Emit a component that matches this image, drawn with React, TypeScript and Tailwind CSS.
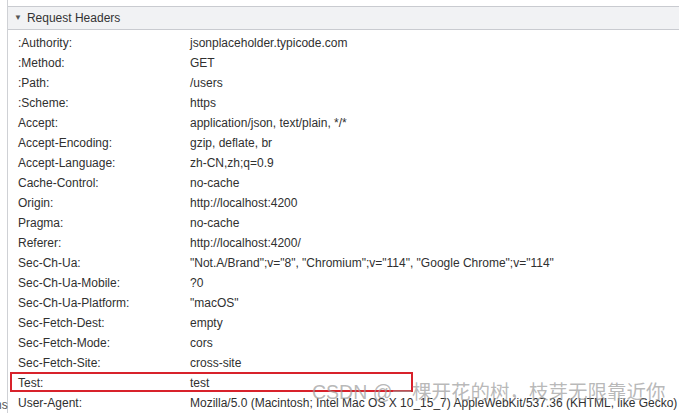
import React from 'react';

const headers: [string, string][] = [
  [':Authority:', 'jsonplaceholder.typicode.com'],
  [':Method:', 'GET'],
  [':Path:', '/users'],
  [':Scheme:', 'https'],
  ['Accept:', 'application/json, text/plain, */*'],
  ['Accept-Encoding:', 'gzip, deflate, br'],
  ['Accept-Language:', 'zh-CN,zh;q=0.9'],
  ['Cache-Control:', 'no-cache'],
  ['Origin:', 'http://localhost:4200'],
  ['Pragma:', 'no-cache'],
  ['Referer:', 'http://localhost:4200/'],
  ['Sec-Ch-Ua:', '"Not.A/Brand";v="8", "Chromium";v="114", "Google Chrome";v="114"'],
  ['Sec-Ch-Ua-Mobile:', '?0'],
  ['Sec-Ch-Ua-Platform:', '"macOS"'],
  ['Sec-Fetch-Dest:', 'empty'],
  ['Sec-Fetch-Mode:', 'cors'],
  ['Sec-Fetch-Site:', 'cross-site'],
  ['Test:', 'test'],
  ['User-Agent:', 'Mozilla/5.0 (Macintosh; Intel Mac OS X 10_15_7) AppleWebKit/537.36 (KHTML, like Gecko)'],
];

export default function App() {
  return (
    <div
      className="relative flex h-[413px] w-[679px] overflow-hidden bg-white text-[12px] text-[#303030]"
      style={{ fontFamily: '"Liberation Sans", Arial, sans-serif' }}
    >
      {/* clipped left pane */}
      <div className="relative w-[8px] shrink-0 border-r border-[#cfd1d5]">
        <span className="absolute left-[-5px] top-[396px] text-[12px] text-[#555]">ns</span>
      </div>

      <div className="flex min-w-0 flex-1 flex-col pt-[6px]">
        <div className="flex h-[27px] items-center gap-[5px] border-y border-[#c9cbd0] bg-[#f1f2f4] pl-[6px] text-[#333]">
          <span className="text-[8px] text-[#555]">▼</span>
          <span>Request Headers</span>
        </div>

        <div className="relative pt-[3px]">
          {headers.map(([k, v]) => (
            <div key={k} className="flex h-[20px] items-center whitespace-nowrap">
              <span className="w-[182px] shrink-0 pl-[10px]">{k}</span>
              <span>{v}</span>
            </div>
          ))}

          {/* highlight on the Test row */}
          <div className="absolute left-[2px] top-[342px] h-[20px] w-[403px] border-2 border-[#d8222b]" />
        </div>
      </div>

      {/* watermark */}
      <div
        className="pointer-events-none absolute left-[312px] top-[378px] whitespace-nowrap text-[19.5px] text-[#9a9a9a]/70"
        style={{ fontFamily: '"Liberation Sans", "Noto Sans CJK SC", sans-serif' }}
      >
        CSDN @一棵开花的树，枝芽无限靠近你
      </div>
    </div>
  );
}
